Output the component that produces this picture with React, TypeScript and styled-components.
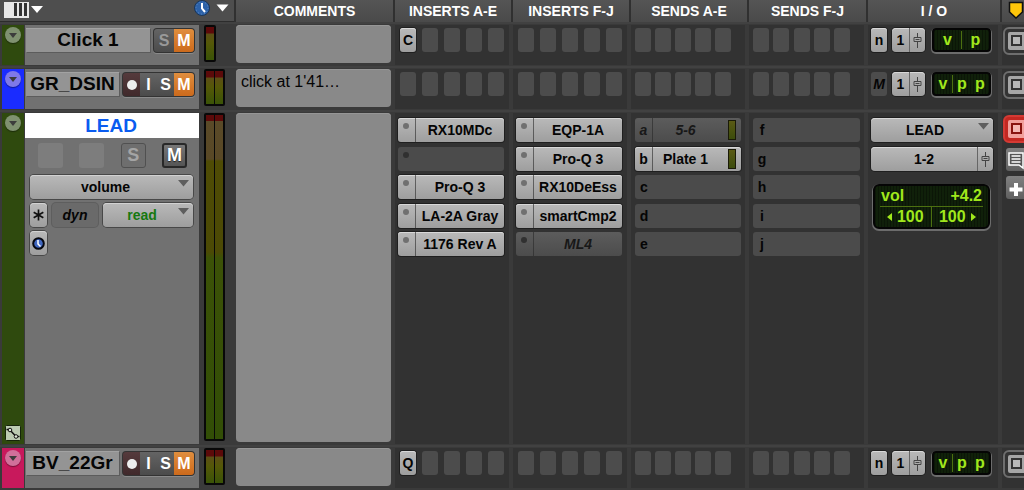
import React from "react";
import styled, { createGlobalStyle, css } from "styled-components";

const Global = createGlobalStyle`
  * { box-sizing: border-box; }
  body {
    margin: 0;
    background: #3a3a3a;
    color: #050505;
    font: bold 14px/24px "Liberation Sans", Arial, sans-serif;
  }
  button, textarea { font: inherit; color: inherit; margin: 0; padding: 0; border: 0; }
  button { display: block; cursor: pointer; white-space: nowrap; }
  svg { display: block; }
`;

const face = "linear-gradient(#b9b9b9, #9e9e9e)";

const Page = styled.main`
  min-height: 100vh;
  display: flex;
  flex-direction: column;
  padding-bottom: 1px;
  overflow: hidden;
`;

const columns = css`
  display: grid;
  grid-template-columns: 25px 174px 35px minmax(100px, 1fr) 118px 118px 118px 119px 134px 24px;
`;

const Header = styled.header`
  ${columns}
  height: 22px;
  color: #fff;
  text-align: center;
  line-height: 22px;
  background: #4e4e4e;
  border-bottom: 1px solid #2c2c2c;
`;

const Heading = styled.div`
  border-left: 2px solid #303030;
  background: linear-gradient(#555, #4a4a4a);
`;

const Marker = styled.svg`
  margin: 1px 0 0 6px;
`;

const Tools = styled.div`
  grid-column: 1 / 4;
  display: flex;
  align-items: flex-start;
  padding: 0 5px 0 4px;
`;

const ToolButton = styled.button<{ $push?: boolean }>`
  background: none;
  margin-left: ${(p) => (p.$push ? "auto" : 0)};
  height: 18px;
`;

const TrackRow = styled.section<{ $tall?: boolean }>`
  ${columns}
  flex: ${(p) => (p.$tall ? "1 0 auto" : "0 0 44px")};
  border-top: 2px solid #414141;
`;

const Strip = styled.div<{ $color: string }>`
  display: flex;
  flex-direction: column;
  justify-content: space-between;
  align-items: center;
  margin: 1px 1px 1px 2px;
  padding: 2px 0 3px;
  background: ${(p) => p.$color};
`;

const Round = styled.button<{ $tint: string }>`
  width: 16px;
  height: 16px;
  border-radius: 8px;
  background: ${(p) => p.$tint};
  box-shadow: 0 1px 1px rgba(0, 0, 0, 0.4);
  display: grid;
  place-items: center;
`;

const Panel = styled.div`
  margin: 1px 0;
  background: #717171;
`;

const NameLine = styled.div`
  display: flex;
  justify-content: space-between;
  padding: 3px 4px 0 1px;
`;

const Plate = styled.button`
  flex: 1;
  height: 24px;
  margin-right: 3px;
  background: #949494;
  box-shadow: 1px 1px 0 #5c5c5c, inset 0 1px 0 #a2a2a2;
  font-size: 19px;
`;

const Modes = styled.div`
  display: flex;
  padding: 1px;
  height: 25px;
  border-radius: 4px;
  background: #333;
  box-shadow: 0 1px 0 #8a8a8a;
`;

const modeFill = {
  rec: "linear-gradient(#553a3c, #40292b)",
  plain: "linear-gradient(#646464, #4b4b4b)",
  mute: "linear-gradient(#e08e3e, #cc6a1c)",
};

const Mode = styled.button<{ $kind: keyof typeof modeFill; $dim?: boolean; $wide?: boolean }>`
  width: ${(p) => (p.$wide ? 20 : 17)}px;
  height: 23px;
  background: ${(p) => modeFill[p.$kind]};
  color: ${(p) => (p.$dim ? "#999" : "#fff")};
  font-size: 16px;
  line-height: 23px;
  display: grid;
  place-items: center;
  &:first-child { border-radius: 3px 0 0 3px; }
  &:last-child { border-radius: 0 3px 3px 0; }
`;

const Dot = styled.span`
  width: 10px;
  height: 10px;
  border-radius: 5px;
  background: #eee;
`;

const LeadName = styled.button`
  width: 100%;
  height: 25px;
  background: #fff;
  color: #0a5cf0;
  font-size: 19px;
  line-height: 25px;
  padding-right: 2px;
`;

const LeadModes = styled.div`
  display: flex;
  justify-content: space-between;
  padding: 5px 12px 7px 13px;
`;

const LeadMode = styled.button<{ $look: "blank" | "off" | "on" }>`
  width: 25px;
  height: 25px;
  border-radius: 3px;
  font-size: 18px;
  line-height: 21px;
  background: ${(p) => (p.$look === "blank" ? "#7d7d7d" : p.$look === "off" ? "#6e6e6e" : "linear-gradient(#777, #555)")};
  color: ${(p) => (p.$look === "on" ? "#fff" : "#a4a4a4")};
  border: ${(p) => (p.$look === "blank" ? "0" : p.$look === "off" ? "1px solid #505050" : "2px solid #282828")};
  text-shadow: ${(p) => (p.$look === "on" ? "0 1px 1px #222" : "none")};
`;

const Controls = styled.div`
  display: grid;
  grid-template-columns: 17px 46px 1fr;
  gap: 4px 5px;
  padding: 0 6px 0 5px;
`;

const Chip = styled.button<{ $off?: boolean; $span?: boolean; $color?: string }>`
  position: relative;
  height: 24px;
  grid-column: ${(p) => (p.$span ? "1 / -1" : "auto")};
  padding-right: ${(p) => (p.$span || p.$color ? 12 : 0)}px;
  border-radius: 4px;
  background: ${(p) => (p.$off ? "#6a6a6a" : face)};
  box-shadow: ${(p) => (p.$off ? "0 0 0 1px #5e5e5e" : "0 0 0 1px #484848, inset 0 1px 0 #d2d2d2")};
  color: ${(p) => p.$color ?? "#050505"};
  font-style: ${(p) => (p.$off ? "italic" : "normal")};
  > svg { margin: 0 auto; }
`;

const Corner = styled.svg`
  position: absolute;
  right: 4px;
  top: 5px;
`;

const MeterCell = styled.div`
  display: flex;
  padding: 1px 0 4px 5px;
`;

const Meter = styled.div`
  display: flex;
  gap: 1px;
  padding: 2px;
  background: #080808;
  border-radius: 2px;
`;

const Bar = styled.div<{ $tall?: boolean }>`
  width: 8px;
  background: ${(p) =>
    p.$tall
      ? "linear-gradient(#5c0a0a 6px, #5a4a28 6px, #594826 44px, #4f4c05 46px, #4c4a05 137px, #3c5207 143px, #324e06)"
      : "linear-gradient(#5c0a0a 6px, #5c4e16 7px, #555808 16px, #3a5307)"};
`;

const CommentCell = styled.div`
  display: flex;
  padding: 1px 2px 3px;
`;

const Comment = styled.textarea`
  width: 100%;
  resize: none;
  padding: 2px 5px;
  border-radius: 4px;
  background: #898989;
  box-shadow: inset 0 1px 0 #969696;
  font-weight: normal;
  font-size: 16px;
  line-height: 21px;
  overflow: hidden;
  outline: none;
`;

const Cell = styled.div<{ $send?: boolean }>`
  margin: 1px 2px;
  padding: ${(p) => (p.$send ? "3px 4px" : "3px 5px 3px 3px")};
  background: #323232;
  min-width: 0;
`;

const Slots = styled.div<{ $send?: boolean }>`
  display: flex;
  justify-content: space-between;
  padding: ${(p) => (p.$send ? "0 10px 0 0" : "0 0 0 2px")};
`;

const Slot = styled.button<{ $state?: "on" | "off" | "empty" }>`
  width: 16px;
  height: 24px;
  border-radius: 3px;
  background: ${(p) => (p.$state === "on" ? face : "#4c4c4c")};
  box-shadow: ${(p) => (p.$state === "on" ? "0 0 0 1px #1f1f1f, inset 0 1px 0 #d8d8d8" : "none")};
  font-style: ${(p) => (p.$state === "off" ? "italic" : "normal")};
`;

const Stack = styled.div`
  height: 138px;
  display: flex;
  flex-direction: column;
  justify-content: space-between;
  margin-top: 2px;
`;

const lit = css`
  background: ${face};
  box-shadow: 0 0 0 1px #1f1f1f, inset 0 1px 0 #d8d8d8;
`;

const Device = styled.button<{ $look: "on" | "off" | "empty" }>`
  display: flex;
  width: 100%;
  height: 24px;
  border-radius: 3px;
  overflow: hidden;
  background: ${(p) => (p.$look === "off" ? "linear-gradient(#5c5c5c, #4c4c4c)" : "#4b4b4b")};
  color: ${(p) => (p.$look === "off" ? "#181818" : "#050505")};
  font-style: ${(p) => (p.$look === "off" ? "italic" : "normal")};
  ${(p) => p.$look === "on" && lit}
`;

const Lead = styled.span<{ $line?: boolean }>`
  flex: 0 0 18px;
  height: 24px;
  border-right: ${(p) => (p.$line ? "1px solid rgba(40,40,40,.6)" : "0")};
`;

const Led = styled.span<{ $dark?: boolean }>`
  display: block;
  width: 6px;
  height: 6px;
  margin: 5px 0 0 5px;
  border-radius: 3px;
  background: ${(p) => (p.$dark ? "#303030" : "#707070")};
`;

const DeviceText = styled.span`
  flex: 1;
  text-align: center;
`;

const MiniMeter = styled.span`
  width: 8px;
  height: 20px;
  margin: 2px 5px 0 10px;
  border: 1px solid #1a1a08;
  background: linear-gradient(#5a5a14, #3c4c0c);
`;

const IoLine = styled.div`
  display: flex;
  gap: 5px;
`;

const IoGroup = styled.div`
  display: grid;
  gap: 5px;
  margin-top: 2px;
`;

const IoSelect = styled.button`
  ${lit}
  position: relative;
  height: 24px;
  border-radius: 4px;
  padding-right: 14px;
`;

const Fader = styled.button<{ $wide?: boolean }>`
  display: flex;
  width: ${(p) => (p.$wide ? "100%" : "33px")};
  height: 24px;
  border-radius: 4px;
  ${lit}
`;

const FaderIcon = styled.span`
  flex: 0 0 16px;
  height: 24px;
  border-left: 1px solid #666;
  display: grid;
  place-items: center;
`;

const green = css`
  color: #a0e81c;
  border: 2px solid #050505;
  background-color: #10200a;
  background-image: repeating-linear-gradient(90deg, rgba(0, 0, 0, 0.3) 0 1px, transparent 1px 3px);
  box-shadow: 0 1px 0 1px #6c6c6c;
`;

const Lcd = styled.button`
  ${green}
  flex: 0 0 59px;
  height: 24px;
  margin-left: 2px;
  border-radius: 4px;
  display: flex;
  align-items: center;
  font-size: 16px;
  line-height: 18px;
`;

const LcdPart = styled.span<{ $line?: boolean }>`
  flex: 1;
  text-align: center;
  height: 18px;
  border-right: ${(p) => (p.$line ? "1px solid #4c7010" : "0")};
`;

const Display = styled.div`
  ${green}
  margin: 8px 3px 0 2px;
  padding: 0 5px;
  border-radius: 6px;
  font-size: 16px;
  line-height: 20px;
`;

const DisplayTop = styled.div`
  display: flex;
  justify-content: space-between;
  border-bottom: 1px solid #4c7010;
  padding: 0 1px;
`;

const DisplayPans = styled.div`
  display: grid;
  grid-template-columns: 1fr 1fr;
`;

const Pan = styled.span<{ $line?: boolean }>`
  display: flex;
  align-items: center;
  justify-content: center;
  gap: 5px;
  border-right: ${(p) => (p.$line ? "1px solid #4c7010" : "0")};
`;

const EdgeCell = styled.div`
  margin: 1px 0 1px 2px;
  padding: 2px 0 0 1px;
  background: #323232;
  overflow: hidden;
`;

const EdgeTools = styled.div`
  padding: 5px 0 0 3px;
  display: grid;
  gap: 5px;
`;

const LaneButton = styled.button<{ $hot?: boolean }>`
  width: 28px;
  height: 28px;
  border: 2px solid ${(p) => (p.$hot ? "#d43a34" : "#6e6e6e")};
  border-radius: 6px;
  padding: 3px;
  background: ${(p) => (p.$hot ? "#c42822" : "#333")};
`;

const SideButton = styled.button`
  width: 24px;
  height: 23px;
  border-radius: 3px;
  background: linear-gradient(#808080, #606060);
`;

const Arrow = () => (
  <Corner width="11" height="7" viewBox="0 0 11 7">
    <path d="M0 0H11L5.5 6.5Z" fill="#5e5e5e" />
  </Corner>
);

const FaderGlyph = () => (
  <FaderIcon>
    <svg width="9" height="15" viewBox="0 0 9 15" fill="none" stroke="#444">
      <path d="M4.5 0V4.5M4.5 8.5V15M1 4.5H8V8.5H1ZM2.5 6.5H6.5" />
    </svg>
  </FaderIcon>
);

const Disclosure = ({ tint }: { tint: string }) => (
  <Round $tint={tint} aria-label="Track options">
    <svg width="8" height="5" viewBox="0 0 8 5">
      <path d="M0 0H8L4 5Z" fill="#3c3c3c" />
    </svg>
  </Round>
);

const Lane = ({ hot }: { hot?: boolean }) => (
  <LaneButton $hot={hot} aria-label="Edit lane">
    <svg width="18" height="18" viewBox="0 0 18 18">
      <rect width="18" height="18" rx="2" fill={hot ? "#f2a09c" : "#a6a6a6"} />
      <rect x="4" y="4" width="9" height="9" fill={hot ? "#f6b8b4" : "#b8b8b8"} stroke={hot ? "#8a1410" : "#333"} strokeWidth="2" />
    </svg>
  </LaneButton>
);

const SlotRow = ({ first, send }: { first?: string; send?: boolean }) => (
  <Cell $send={send}>
    <Slots $send={send}>
      {[0, 1, 2, 3, 4].map((i) => (
        <Slot key={i} $state={i === 0 && first ? "on" : "empty"} aria-label={`Slot ${i + 1}`}>
          {i === 0 ? first : null}
        </Slot>
      ))}
    </Slots>
  </Cell>
);

type Entry = { text?: string; look: "on" | "off" | "empty" };

const Inserts = ({ items }: { items: Entry[] }) => (
  <Cell>
    <Stack>
      {items.map((d, i) => (
        <Device key={i} $look={d.look} aria-label={d.text ?? "Empty insert"}>
          <Lead $line={d.look !== "empty"}>
            <Led $dark={d.look !== "on"} />
          </Lead>
          <DeviceText>{d.text}</DeviceText>
        </Device>
      ))}
    </Stack>
  </Cell>
);

const Sends = ({ letters, items = [] }: { letters: string; items?: Entry[] }) => (
  <Cell $send>
    <Stack>
      {letters.split("").map((l, i) => {
        const d = items[i];
        return (
          <Device key={l} $look={d ? d.look : "empty"}>
            <Lead $line={!!d}>{l}</Lead>
            {d && <DeviceText>{d.text}</DeviceText>}
            {d && <MiniMeter />}
          </Device>
        );
      })}
    </Stack>
  </Cell>
);

type Track = {
  name: string;
  color: string;
  tint: string;
  stereo: boolean;
  comment?: string;
  insert?: string;
  input: string;
};

const SmallTrack = ({ t }: { t: Track }) => (
  <TrackRow>
    <Strip $color={t.color}>
      <Disclosure tint={t.tint} />
    </Strip>
    <Panel>
      <NameLine>
        <Plate>{t.name}</Plate>
        <Modes>
          {t.stereo ? (
            <>
              <Mode $kind="rec" aria-label="Record"><Dot /></Mode>
              <Mode $kind="plain">I</Mode>
              <Mode $kind="plain">S</Mode>
              <Mode $kind="mute" $wide>M</Mode>
            </>
          ) : (
            <>
              <Mode $kind="plain" $dim $wide>S</Mode>
              <Mode $kind="mute" $wide>M</Mode>
            </>
          )}
        </Modes>
      </NameLine>
    </Panel>
    <MeterCell>
      <Meter>
        <Bar />
        {t.stereo && <Bar />}
      </Meter>
    </MeterCell>
    <CommentCell>
      <Comment rows={1} aria-label={`${t.name} comments`} defaultValue={t.comment} />
    </CommentCell>
    <SlotRow first={t.insert} />
    <SlotRow />
    <SlotRow send />
    <SlotRow send />
    <Cell>
      <IoLine>
        <Slot $state={t.input === "M" ? "off" : "on"}>{t.input}</Slot>
        <Fader>
          <DeviceText>1</DeviceText>
          <FaderGlyph />
        </Fader>
        <Lcd>
          <LcdPart $line>v</LcdPart>
          <LcdPart>p</LcdPart>
          {t.stereo && <LcdPart>p</LcdPart>}
        </Lcd>
      </IoLine>
    </Cell>
    <EdgeCell>
      <Lane />
    </EdgeCell>
  </TrackRow>
);

const insertsA: Entry[] = [
  { text: "RX10MDc", look: "on" },
  { look: "empty" },
  { text: "Pro-Q 3", look: "on" },
  { text: "LA-2A Gray", look: "on" },
  { text: "1176 Rev A", look: "on" },
];

const insertsF: Entry[] = [
  { text: "EQP-1A", look: "on" },
  { text: "Pro-Q 3", look: "on" },
  { text: "RX10DeEss", look: "on" },
  { text: "smartCmp2", look: "on" },
  { text: "ML4", look: "off" },
];

const sendsA: Entry[] = [
  { text: "5-6", look: "off" },
  { text: "Plate 1", look: "on" },
];

const LeadIo = () => (
  <IoGroup>
    <IoSelect>LEAD<Arrow /></IoSelect>
    <Fader $wide>
      <DeviceText>1-2</DeviceText>
      <FaderGlyph />
    </Fader>
    <Display>
      <DisplayTop>
        <span>vol</span>
        <span>+4.2</span>
      </DisplayTop>
      <DisplayPans>
        <Pan $line>
          <svg width="5" height="8" viewBox="0 0 5 8"><path d="M5 0V8L0 4Z" fill="#a0e81c" /></svg>
          100
        </Pan>
        <Pan>
          100
          <svg width="5" height="8" viewBox="0 0 5 8"><path d="M0 0V8L5 4Z" fill="#a0e81c" /></svg>
        </Pan>
      </DisplayPans>
    </Display>
  </IoGroup>
);

const LeadTrack = () => (
  <TrackRow $tall>
    <Strip $color="#2f4a0e">
      <Disclosure tint="#7f9170" />
      <svg width="16" height="16" viewBox="0 0 16 16">
        <rect x="0.5" y="0.5" width="15" height="15" rx="1" fill="#bccbb2" stroke="#16240a" />
        <path d="M1.5 4.5H4.5L11 11.5H14.5" fill="none" stroke="#111" strokeWidth="1.5" />
        <circle cx="5" cy="5" r="1.8" fill="#dfe8d8" stroke="#111" />
        <circle cx="11" cy="11.5" r="1.8" fill="#dfe8d8" stroke="#111" />
      </svg>
    </Strip>
    <Panel>
      <LeadName>LEAD</LeadName>
      <LeadModes>
        <LeadMode $look="blank" aria-label="Record" />
        <LeadMode $look="blank" aria-label="Input monitor" />
        <LeadMode $look="off">S</LeadMode>
        <LeadMode $look="on">M</LeadMode>
      </LeadModes>
      <Controls>
        <Chip $span>volume<Arrow /></Chip>
        <Chip aria-label="Freeze">
          <svg width="13" height="14" viewBox="0 0 14 14">
            <path d="M7 1V13M1.8 4L12.2 10M12.2 4L1.8 10" stroke="#111" strokeWidth="1.8" />
          </svg>
        </Chip>
        <Chip $off>dyn</Chip>
        <Chip $color="#16780f">read<Arrow /></Chip>
        <Chip aria-label="Timebase">
          <svg width="13" height="13" viewBox="0 0 13 13">
            <circle cx="6.5" cy="6.5" r="5.3" fill="#3f66c0" stroke="#05070f" strokeWidth="2" />
            <path d="M6 3V7L8.5 9.5" fill="none" stroke="#fff" strokeWidth="1.5" />
          </svg>
        </Chip>
      </Controls>
    </Panel>
    <MeterCell>
      <Meter>
        <Bar $tall />
        <Bar $tall />
      </Meter>
    </MeterCell>
    <CommentCell>
      <Comment rows={1} aria-label="LEAD comments" />
    </CommentCell>
    <Inserts items={insertsA} />
    <Inserts items={insertsF} />
    <Sends letters="abcde" items={sendsA} />
    <Sends letters="fghij" />
    <Cell>
      <LeadIo />
    </Cell>
    <EdgeCell>
      <Lane hot />
      <EdgeTools>
        <SideButton aria-label="Comments">
          <svg width="20" height="20" viewBox="0 0 20 20">
            <path d="M3 3H17V18L13 15H3Z" fill="#555" stroke="#fff" strokeWidth="1.5" />
            <path d="M5.5 6H14.5M5.5 9H14.5M5.5 12H14.5" stroke="#fff" strokeWidth="1.5" />
          </svg>
        </SideButton>
        <SideButton aria-label="Add lane">
          <svg width="20" height="20" viewBox="0 0 20 20">
            <path d="M10 5V18M3.5 11.5H16.5" stroke="#fff" strokeWidth="4" />
          </svg>
        </SideButton>
      </EdgeTools>
    </EdgeCell>
  </TrackRow>
);

export default function App() {
  return (
    <>
      <Global />
      <Page>
        <Header>
          <Tools>
            <ToolButton aria-label="Edit window view">
              <svg width="40" height="18" viewBox="0 0 40 18">
                <rect x="0" y="2" width="25" height="16" fill="#e8e8e8" />
                <path d="M11.5 3V16M16.5 3V16M21.5 3V16" stroke="#333" strokeWidth="3" />
                <path d="M27 6H39L33 13Z" fill="#fff" />
              </svg>
            </ToolButton>
            <ToolButton $push aria-label="Timebase">
              <svg width="36" height="18" viewBox="0 0 36 18">
                <circle cx="9" cy="8" r="7.5" fill="#2d62a8" stroke="#1b3658" />
                <circle cx="9" cy="8" r="6" fill="none" stroke="#5f8cc4" strokeDasharray="1 2.1" />
                <path d="M9 3V8.5L12 12" fill="none" stroke="#fff" strokeWidth="2" />
                <path d="M23.5 4.5H35.5L29.5 11.5Z" fill="#fff" />
              </svg>
            </ToolButton>
          </Tools>
          <Heading>COMMENTS</Heading>
          <Heading>INSERTS A-E</Heading>
          <Heading>INSERTS F-J</Heading>
          <Heading>SENDS A-E</Heading>
          <Heading>SENDS F-J</Heading>
          <Heading>I / O</Heading>
          <Heading>
            <Marker width="16" height="18" viewBox="0 0 16 18">
              <path d="M1.5 1.5H14.5V11L8 17L1.5 11Z" fill="#ffc60a" stroke="#111" strokeWidth="1.5" />
            </Marker>
          </Heading>
        </Header>
        <SmallTrack t={{ name: "Click 1", color: "#2f4a0e", tint: "#7f9170", stereo: false, insert: "C", input: "n" }} />
        <SmallTrack t={{ name: "GR_DSIN", color: "#1a2cff", tint: "#7f79e8", stereo: true, comment: "click at 1'41…", input: "M" }} />
        <LeadTrack />
        <SmallTrack t={{ name: "BV_22Gr", color: "#c8195c", tint: "#d0709a", stereo: true, insert: "Q", input: "n" }} />
      </Page>
    </>
  );
}
